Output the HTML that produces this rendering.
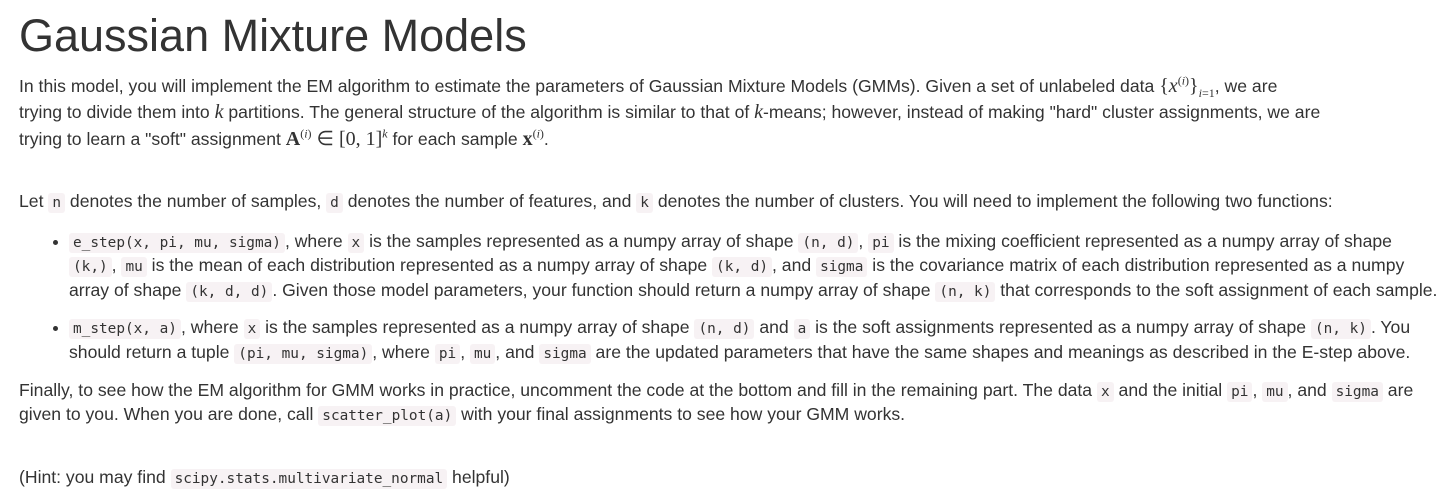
<!DOCTYPE html>
<html><head><meta charset="utf-8"><style>
body{margin:0;background:#fff;color:#333;font-family:"Liberation Sans",Arial,sans-serif;font-size:17.6px;}
.l{position:absolute;white-space:nowrap;line-height:20px;}
h1{position:absolute;left:19px;top:9px;margin:0;font-size:45px;font-weight:normal;line-height:54px;color:#333;}
code{font-family:"DejaVu Sans Mono","Liberation Mono",monospace;font-size:14.4px;background:#f7f2f4;color:#333;padding:2px 4px;border-radius:3px;}
.m{font-family:"Liberation Serif",serif;font-size:20px;}
.i{font-style:italic;}
sup,sub{line-height:0;font-size:12px;}
.b{position:absolute;width:5px;height:5px;border-radius:50%;background:#333;}
</style></head><body>
<h1>Gaussian Mixture Models</h1>
<div class="l" style="left:19px;top:76px">In this model, you will implement the EM algorithm to estimate the parameters of Gaussian Mixture Models (GMMs). Given a set of unlabeled data <span class="m">{<span class="i">x</span><sup>(<i>i</i>)</sup>}<sub><i>i</i>=1</sub></span>, we are</div>
<div class="l" style="left:19px;top:102px">trying to divide them into <span class="m i">k</span> partitions. The general structure of the algorithm is similar to that of <span class="m i">k</span>-means; however, instead of making "hard" cluster assignments, we are</div>
<div class="l" style="left:19px;top:129px">trying to learn a "soft" assignment <span class="m"><b>A</b><sup>(<i>i</i>)</sup> ∈ [0, 1]<sup><i>k</i></sup></span> for each sample <span class="m"><b>x</b><sup>(<i>i</i>)</sup></span>.</div>
<div class="l" style="left:19px;top:191px">Let <code>n</code> denotes the number of samples, <code>d</code> denotes the number of features, and <code>k</code> denotes the number of clusters. You will need to implement the following two functions:</div>
<div class="b" style="left:53px;top:240px"></div>
<div class="l" style="left:69px;top:231px"><code>e_step(x, pi, mu, sigma)</code>, where <code>x</code> is the samples represented as a numpy array of shape <code>(n, d)</code>, <code>pi</code> is the mixing coefficient represented as a numpy array of shape</div>
<div class="l" style="left:69px;top:255px"><code>(k,)</code>, <code>mu</code> is the mean of each distribution represented as a numpy array of shape <code>(k, d)</code>, and <code>sigma</code> is the covariance matrix of each distribution represented as a numpy</div>
<div class="l" style="left:69px;top:280px">array of shape <code>(k, d, d)</code>. Given those model parameters, your function should return a numpy array of shape <code>(n, k)</code> that corresponds to the soft assignment of each sample.</div>
<div class="b" style="left:53px;top:326px"></div>
<div class="l" style="left:69px;top:317px"><code>m_step(x, a)</code>, where <code>x</code> is the samples represented as a numpy array of shape <code>(n, d)</code> and <code>a</code> is the soft assignments represented as a numpy array of shape <code>(n, k)</code>. You</div>
<div class="l" style="left:69px;top:342px">should return a tuple <code>(pi, mu, sigma)</code>, where <code>pi</code>, <code>mu</code>, and <code>sigma</code> are the updated parameters that have the same shapes and meanings as described in the E-step above.</div>
<div class="l" style="left:19px;top:380px">Finally, to see how the EM algorithm for GMM works in practice, uncomment the code at the bottom and fill in the remaining part. The data <code>x</code> and the initial <code>pi</code>, <code>mu</code>, and <code>sigma</code> are</div>
<div class="l" style="left:19px;top:404px">given to you. When you are done, call <code>scatter_plot(a)</code> with your final assignments to see how your GMM works.</div>
<div class="l" style="left:19px;top:467px">(Hint: you may find <code>scipy.stats.multivariate_normal</code> helpful)</div>
</body></html>
